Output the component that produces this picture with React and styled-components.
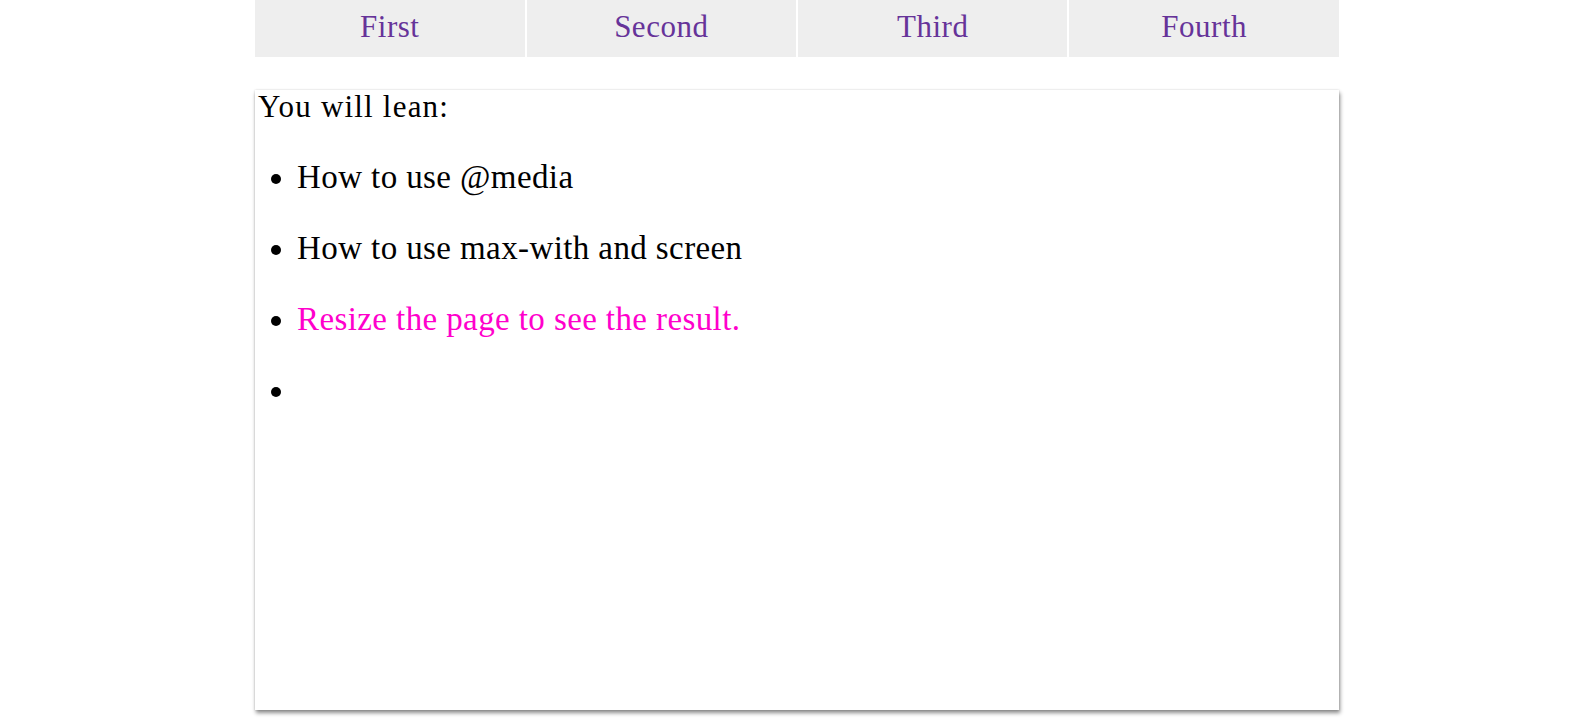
import React from "react";
import styled, { createGlobalStyle } from "styled-components";

const GlobalStyle = createGlobalStyle`
  body {
    margin: 0;
    background: #ffffff;
    font-family: "Liberation Serif", "DejaVu Serif", serif;
  }
`;

const links = ["First", "Second", "Third", "Fourth"];
const points = [
  { text: "How to use @media" },
  { text: "How to use max-with and screen" },
  { text: "Resize the page to see the result.", note: true },
  { text: "" },
];

const App = () => {
  return (
    <>
      <GlobalStyle />
      <Page>
        <Nav>
          {links.map((link) => (
            <NavItem key={link} href="#">
              {link}
            </NavItem>
          ))}
        </Nav>
        <Content>
          <Lead>You will lean:</Lead>
          <List>
            {points.map((item, i) => (
              <Item key={i}>
                <ItemText $note={item.note}>{item.text}</ItemText>
              </Item>
            ))}
          </List>
        </Content>
      </Page>
    </>
  );
};

export const Page = styled.div`
  width: 68%;
  margin: 0 auto;
  padding-bottom: 10px;
  display: flex;
  flex-direction: column;
`;
export const Nav = styled.nav`
  display: grid;
  grid-template-columns: repeat(4, 1fr);
  gap: 2px;
  height: 57px;
`;
export const NavItem = styled.a`
  display: flex;
  align-items: center;
  justify-content: center;
  padding-bottom: 4px;
  background-color: #eeeeee;
  color: #663399;
  font-size: 31px;
  letter-spacing: 0.5px;
  text-decoration: none;
`;
export const Content = styled.div`
  box-sizing: border-box;
  margin-top: 33px;
  height: 620px;
  padding-left: 3px;
  background: #ffffff;
  box-shadow: 1px 3px 4px rgba(0, 0, 0, 0.45), 0 0 2px rgba(0, 0, 0, 0.15);
  color: #000000;
`;
export const Lead = styled.p`
  margin: 0;
  font-size: 31px;
  line-height: 34px;
  letter-spacing: 1.2px;
`;
export const List = styled.ul`
  margin: 35px 0 0;
  padding-left: 39px;
  display: flex;
  flex-direction: column;
  gap: 35px;
`;
export const Item = styled.li`
  font-size: 33px;
  line-height: 36px;
  min-height: 36px;
  color: #000000;
`;
export const ItemText = styled.span`
  letter-spacing: 0.4px;
  color: ${(p) => (p.$note ? "#ff00cc" : "#000000")};
`;

export default App;
